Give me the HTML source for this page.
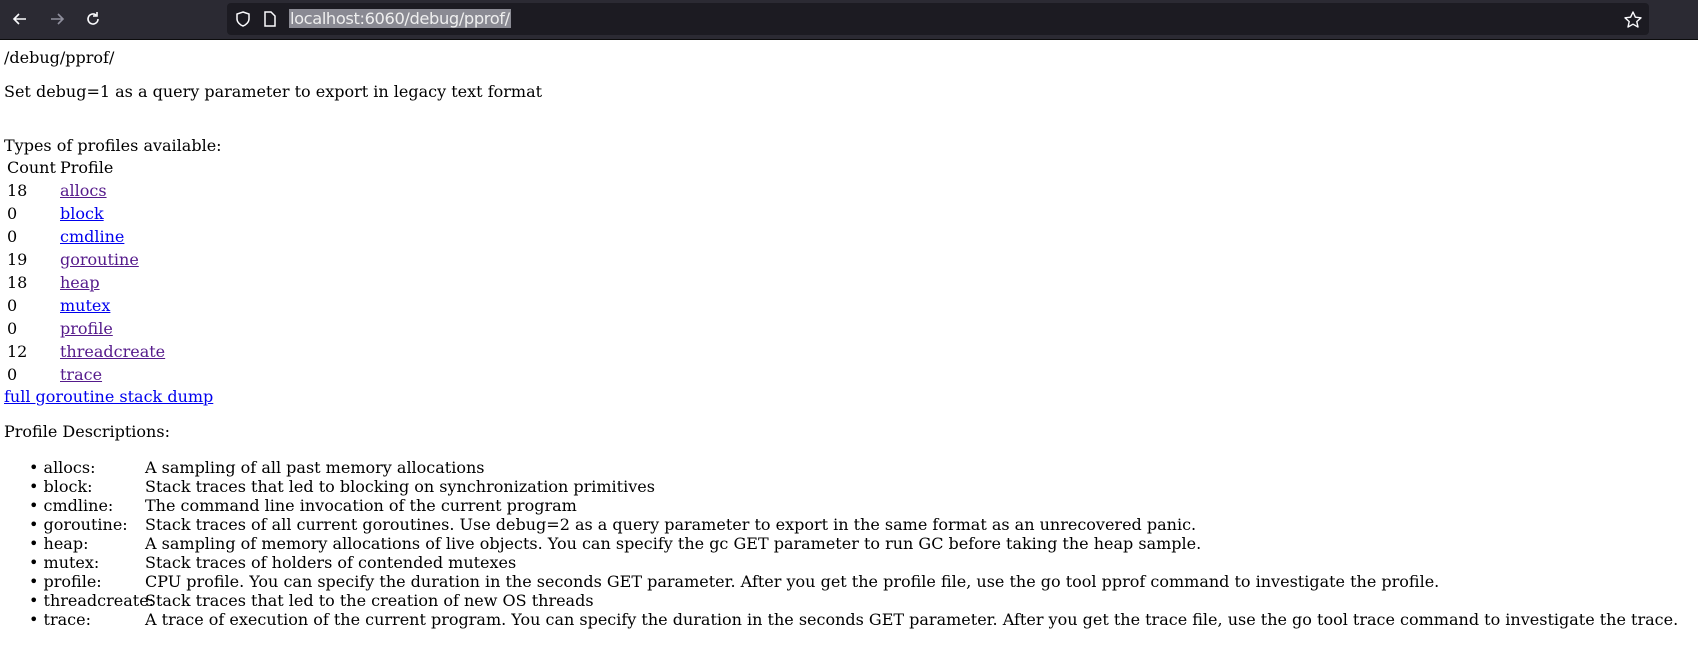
<!DOCTYPE html>
<html><head><meta charset="utf-8"><style>
html,body{margin:0;padding:0;background:#fff;width:1698px;height:657px;overflow:hidden;position:relative}
.bar{position:absolute;left:0;top:0;width:1698px;height:39px;background:#2b2a33;border-bottom:1px solid #0c0c0d}
.url{position:absolute;left:227px;top:3px;width:1422px;height:32px;background:#1c1b22;border-radius:4px}
.utext{position:absolute;left:289px;top:9px;font:16.3px "DejaVu Sans","Liberation Sans",sans-serif;letter-spacing:-0.4px;background:#8a8a93;padding:0 1px;line-height:19px;color:#eee}
.t{position:absolute;font:16px "DejaVu Serif",serif;color:#000;line-height:19px;white-space:nowrap}
a{text-decoration:underline}
.b{color:#0000ee}.v{color:#551a8b}
svg{position:absolute}
</style></head><body>
<div class="bar"></div>
<div class="url"></div>
<svg style="left:10px;top:9px" width="20" height="20" viewBox="0 0 20 20"><path d="M16 10H4M9 5L4 10L9 15" stroke="#fbfbfe" stroke-width="1.6" fill="none"/></svg>
<svg style="left:47px;top:9px" width="20" height="20" viewBox="0 0 20 20"><path d="M4 10H16M11 5L16 10L11 15" stroke="#8f8f9d" stroke-width="1.6" fill="none"/></svg>
<svg style="left:83px;top:9px" width="20" height="20" viewBox="0 0 20 20"><path d="M15 10A5 5 0 1 1 13 6M14 3V7H10" stroke="#fbfbfe" stroke-width="1.6" fill="none"/></svg>
<svg style="left:234px;top:10px" width="18" height="18" viewBox="0 0 18 18"><path d="M9 2L15 4V9C15 12 12 15 9 16C6 15 3 12 3 9V4Z" stroke="#fbfbfe" stroke-width="1.5" fill="none"/></svg>
<svg style="left:262px;top:10px" width="16" height="18" viewBox="0 0 16 18"><path d="M3 2H9L13 6V16H3Z" stroke="#fbfbfe" stroke-width="1.5" fill="none"/></svg>
<div class="utext">localhost:6060/debug/pprof/</div>
<svg style="left:1623px;top:10px" width="20" height="20" viewBox="0 0 20 20"><path d="M10 2L12.4 7.2L18 7.8L13.8 11.6L15 17L10 14.2L5 17L6.2 11.6L2 7.8L7.6 7.2Z" stroke="#fbfbfe" stroke-width="1.4" fill="none" stroke-linejoin="round"/></svg>

<div class="t" style="left:4px;top:48px">/debug/pprof/</div>
<div class="t" style="left:4px;top:82px">Set debug=1 as a query parameter to export in legacy text format</div>
<div class="t" style="left:4px;top:136px">Types of profiles available:</div>
<div class="t" style="left:7px;top:158px">Count</div><div class="t" style="left:60px;top:158px">Profile</div>
<div class="t" style="left:7px;top:181px">18</div><div class="t" style="left:60px;top:181px"><a class="v">allocs</a></div>
<div class="t" style="left:7px;top:204px">0</div><div class="t" style="left:60px;top:204px"><a class="b">block</a></div>
<div class="t" style="left:7px;top:227px">0</div><div class="t" style="left:60px;top:227px"><a class="b">cmdline</a></div>
<div class="t" style="left:7px;top:250px">19</div><div class="t" style="left:60px;top:250px"><a class="v">goroutine</a></div>
<div class="t" style="left:7px;top:273px">18</div><div class="t" style="left:60px;top:273px"><a class="v">heap</a></div>
<div class="t" style="left:7px;top:296px">0</div><div class="t" style="left:60px;top:296px"><a class="b">mutex</a></div>
<div class="t" style="left:7px;top:319px">0</div><div class="t" style="left:60px;top:319px"><a class="v">profile</a></div>
<div class="t" style="left:7px;top:342px">12</div><div class="t" style="left:60px;top:342px"><a class="v">threadcreate</a></div>
<div class="t" style="left:7px;top:365px">0</div><div class="t" style="left:60px;top:365px"><a class="v">trace</a></div>
<div class="t" style="left:4px;top:387px"><a class="b">full goroutine stack dump</a></div>
<div class="t" style="left:4px;top:422px">Profile Descriptions:</div>

<div class="t" style="left:29px;top:458px;line-height:19px">
•&nbsp;allocs:<br>•&nbsp;block:<br>•&nbsp;cmdline:<br>•&nbsp;goroutine:<br>•&nbsp;heap:<br>•&nbsp;mutex:<br>•&nbsp;profile:<br>•&nbsp;threadcreate:<br>•&nbsp;trace:</div>
<div class="t" style="left:145px;top:458px;line-height:19px">
A sampling of all past memory allocations<br>
Stack traces that led to blocking on synchronization primitives<br>
The command line invocation of the current program<br>
Stack traces of all current goroutines. Use debug=2 as a query parameter to export in the same format as an unrecovered panic.<br>
A sampling of memory allocations of live objects. You can specify the gc GET parameter to run GC before taking the heap sample.<br>
Stack traces of holders of contended mutexes<br>
CPU profile. You can specify the duration in the seconds GET parameter. After you get the profile file, use the go tool pprof command to investigate the profile.<br>
Stack traces that led to the creation of new OS threads<br>
A trace of execution of the current program. You can specify the duration in the seconds GET parameter. After you get the trace file, use the go tool trace command to investigate the trace.</div>
</body></html>
